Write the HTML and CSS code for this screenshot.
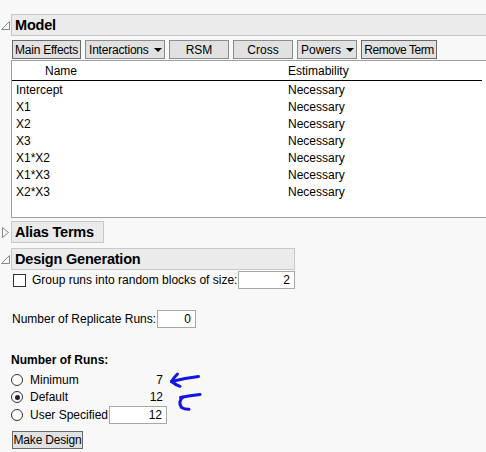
FILE: index.html
```html
<!DOCTYPE html>
<html>
<head>
<meta charset="utf-8">
<link rel="stylesheet" href="styles.css">
</head>
<body>
<div class="page">
  <div class="head">
    <span class="twisty"><svg width="11" height="11" viewBox="0 0 11 11"><polygon points="9.5,1.5 9.5,9.5 1.5,9.5" fill="none" stroke="#8a8a8a" stroke-width="1"/></svg></span>
    <div class="head-box model-head">Model</div>
  </div>
  <div class="model-body">
    <div class="btn-row">
      <button class="btn dark w-main">Main Effects</button>
      <button class="btn w-inter">Interactions <span class="caret"></span></button>
      <button class="btn w60">RSM</button>
      <button class="btn w60">Cross</button>
      <button class="btn w-pow">Powers <span class="caret"></span></button>
      <button class="btn dark w-rem">Remove Term</button>
    </div>
    <div class="list">
      <div class="list-head">
        <div class="col-name head-name">Name</div>
        <div class="col-est">Estimability</div>
      </div>
      <div class="list-row"><div class="col-name">Intercept</div><div class="col-est">Necessary</div></div>
      <div class="list-row"><div class="col-name">X1</div><div class="col-est">Necessary</div></div>
      <div class="list-row"><div class="col-name">X2</div><div class="col-est">Necessary</div></div>
      <div class="list-row"><div class="col-name">X3</div><div class="col-est">Necessary</div></div>
      <div class="list-row"><div class="col-name">X1*X2</div><div class="col-est">Necessary</div></div>
      <div class="list-row"><div class="col-name">X1*X3</div><div class="col-est">Necessary</div></div>
      <div class="list-row"><div class="col-name">X2*X3</div><div class="col-est">Necessary</div></div>
    </div>
  </div>

  <div class="head alias">
    <span class="twisty"><svg width="11" height="13" viewBox="0 0 11 13"><polygon points="2.5,1.5 8.5,6.5 2.5,11.5" fill="none" stroke="#8a8a8a" stroke-width="1"/></svg></span>
    <div class="head-box alias-head">Alias Terms</div>
  </div>

  <div class="head dg">
    <span class="twisty"><svg width="11" height="11" viewBox="0 0 11 11"><polygon points="9.5,1.5 9.5,9.5 1.5,9.5" fill="none" stroke="#8a8a8a" stroke-width="1"/></svg></span>
    <div class="head-box dg-head">Design Generation</div>
  </div>

  <div class="dg-body">
    <div class="check-row">
      <span class="checkbox"></span>
      <span class="check-label">Group runs into random blocks of size:</span>
      <span class="field w-block">2</span>
    </div>
    <div class="rep-row">
      <span class="rep-label">Number of Replicate Runs:</span>
      <span class="field w-rep">0</span>
    </div>
    <div class="runs-title">Number of Runs:</div>
    <div class="runs">
      <div class="radio-cell"><span class="radio"></span>Minimum</div>
      <div class="val">7</div>
      <div class="radio-cell"><span class="radio on"></span>Default</div>
      <div class="val">12</div>
      <div class="radio-cell"><span class="radio"></span>User Specified</div>
      <div class="val-field"><span class="field w-user">12</span></div>
      <svg class="arrows" width="45" height="50" viewBox="0 0 45 50">
        <g fill="none" stroke="#1414e6" stroke-width="3" stroke-linecap="round" stroke-linejoin="round">
          <path d="M33.5,10.5 Q20,12 6.5,15.5"/>
          <path d="M12.5,8 Q8.5,12 6.5,15.5 Q10,18.5 15,20.3"/>
          <path d="M35,28.5 Q25,29.5 15.5,31.5"/>
          <path d="M18,31 Q12.5,36 16.5,41.5 Q20,43.5 24,43.3"/>
        </g>
      </svg>
    </div>
    <button class="btn dark make">Make Design</button>
  </div>
</div>
</body>
</html>
```

FILE: styles.css
```css
html, body {
  margin: 0;
  padding: 0;
}
body {
  background: #f8f8f8;
  font-family: "Liberation Sans", Arial, sans-serif;
  font-size: 12px;
  color: #000;
  width: 486px;
  height: 452px;
  overflow: hidden;
}
.page {
  padding-top: 14px;
  width: 486px;
}
.head {
  display: flex;
  align-items: center;
  height: 22px;
}
.twisty {
  flex: none;
  width: 11px;
  display: flex;
  align-items: center;
  justify-content: flex-start;
}
.head-box {
  box-sizing: border-box;
  height: 22px;
  border: 1px solid #c8c8c8;
  background: #ebebeb;
  padding: 0 3px;
  font-weight: bold;
  font-size: 14.5px;
  line-height: 20px;
  letter-spacing: -0.2px;
  white-space: nowrap;
}
.model-head {
  flex: 1;
  border-right: none;
}
.alias {
  margin-top: 3px;
}
.alias-head {
  width: 93px;
}
.dg {
  margin-top: 5px;
}
.dg-head {
  width: 284px;
}
.model-body {
  padding-left: 12px;
}
.btn-row {
  display: flex;
  gap: 4px;
  margin-top: 4px;
}
.btn {
  box-sizing: border-box;
  height: 19px;
  border: 1px solid #8c8c8c;
  background: #e1e1e1;
  font-family: "Liberation Sans", Arial, sans-serif;
  font-size: 12px;
  color: #000;
  padding: 0 2px;
  margin: 0;
  display: flex;
  align-items: center;
  justify-content: center;
  white-space: nowrap;
  flex: none;
}
.btn.dark {
  border-color: #6a6a6a;
}
.w-main { width: 69px; letter-spacing: -0.25px; }
.w-inter { width: 80px; justify-content: flex-start; padding-left: 3px; letter-spacing: -0.2px; }
.w60 { width: 60px; }
.w-pow { width: 60px; justify-content: flex-start; padding-left: 3px; }
.w-rem { width: 76px; letter-spacing: -0.45px; }
.caret {
  display: inline-block;
  width: 0;
  height: 0;
  border-left: 4px solid transparent;
  border-right: 4px solid transparent;
  border-top: 4px solid #000;
  margin-left: 5px;
}
.list {
  box-sizing: border-box;
  margin-top: 1px;
  margin-left: -1px;
  height: 158px;
  border: 1px solid #a0a0a0;
  border-right: none;
  background: #fff;
}
.list-head {
  display: flex;
  height: 19px;
  align-items: center;
  border-bottom: 1px solid #000;
  margin-right: 4px;
}
.list-row {
  display: flex;
  height: 17px;
  align-items: center;
}
.col-name {
  width: 272px;
  padding-left: 4px;
  flex: none;
}
.head-name {
  padding-left: 33px;
  width: 243px;
}
.col-est {
  flex: 1;
}
.dg-body {
  padding-left: 11px;
}
.check-row {
  display: flex;
  align-items: center;
  height: 18px;
  margin-top: 1px;
}
.checkbox {
  box-sizing: border-box;
  width: 13px;
  height: 13px;
  border: 1px solid #333;
  background: #fff;
  margin-left: 2px;
  flex: none;
}
.check-label {
  margin-left: 6px;
  width: 206px;
  white-space: nowrap;
  flex: none;
}
.field {
  box-sizing: border-box;
  display: inline-block;
  height: 18px;
  line-height: 16px;
  border: 1px solid #a8a8a8;
  background: #fff;
  text-align: right;
  padding-right: 4px;
  flex: none;
}
.w-block { width: 57px; }
.w-rep { width: 39px; }
.w-user { width: 58px; }
.rep-row {
  display: flex;
  align-items: center;
  height: 18px;
  margin-top: 21px;
}
.rep-label {
  margin-left: 1px;
  width: 145px;
  white-space: nowrap;
  flex: none;
}
.runs-title {
  font-weight: bold;
  line-height: 14px;
  margin-top: 25px;
}
.runs {
  position: relative;
  display: grid;
  grid-template-columns: 98px 58px;
  grid-auto-rows: 17.5px;
  margin-top: 4px;
}
.radio-cell {
  display: flex;
  align-items: center;
  white-space: nowrap;
}
.radio {
  box-sizing: border-box;
  width: 12px;
  height: 12px;
  border: 1px solid #333;
  border-radius: 50%;
  background: #fff;
  margin-right: 7px;
  position: relative;
  flex: none;
}
.radio.on::after {
  content: "";
  position: absolute;
  left: 2.5px;
  top: 2.5px;
  width: 5px;
  height: 5px;
  border-radius: 50%;
  background: #222;
}
.val {
  display: flex;
  align-items: center;
  justify-content: flex-end;
  padding-right: 4px;
}
.val-field {
  display: flex;
  align-items: center;
}
.arrows {
  position: absolute;
  left: 154px;
  top: -5px;
}
.make {
  width: 71px;
  height: 18px;
  margin-top: 7px;
  margin-left: 1px;
  letter-spacing: -0.2px;
}
```
